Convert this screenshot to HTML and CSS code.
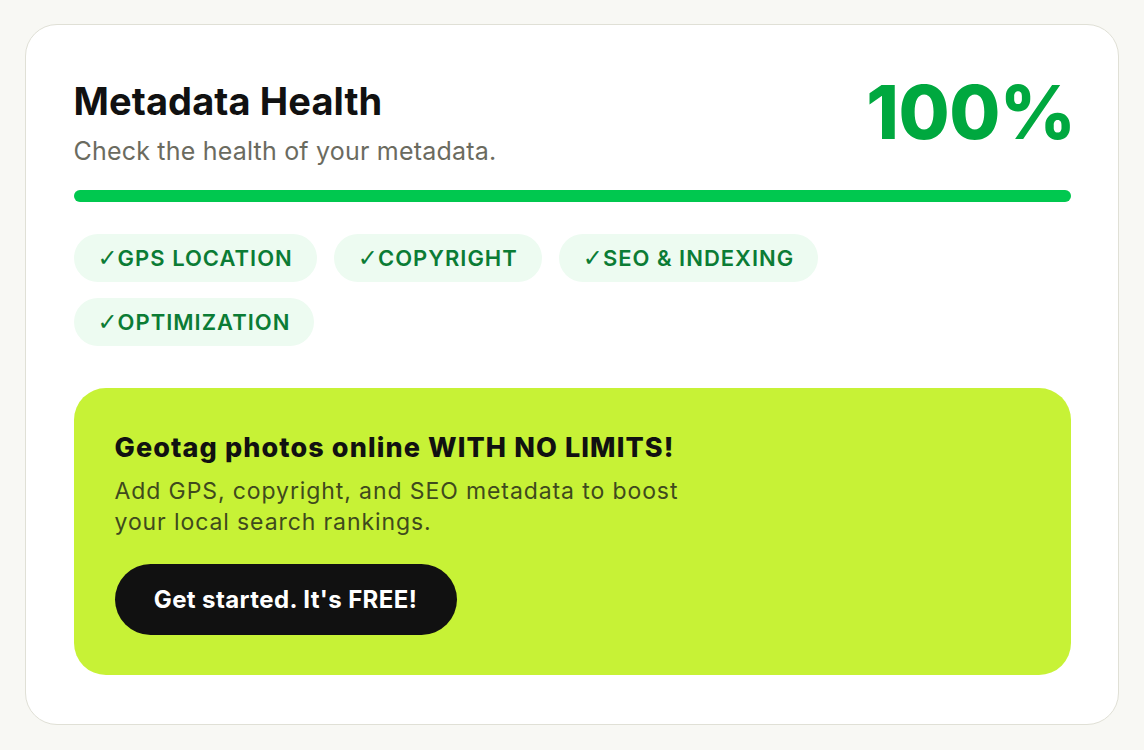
FILE: index.html
```html
<!DOCTYPE html>
<html lang="en">
<head>
<meta charset="utf-8">
<title>Metadata Health</title>
<link rel="stylesheet" href="styles.css">
</head>
<body>
<div class="card">
  <div class="head">
    <div class="head-text">
      <h1 class="title">Metadata Health</h1>
      <p class="subtitle">Check the health of your metadata.</p>
    </div>
    <div class="score">100%</div>
  </div>
  <div class="bar"><div class="bar-fill" style="width:100%"></div></div>
  <div class="chips">
    <span class="chip"><span class="tick">✓</span>GPS LOCATION</span>
    <span class="chip"><span class="tick">✓</span>COPYRIGHT</span>
    <span class="chip"><span class="tick">✓</span>SEO &amp; INDEXING</span>
    <span class="chip"><span class="tick">✓</span>OPTIMIZATION</span>
  </div>
  <div class="promo">
    <h2 class="promo-title">Geotag photos online WITH NO LIMITS!</h2>
    <p class="promo-text">Add GPS, copyright, and SEO metadata to boost your local search rankings.</p>
    <a class="cta" href="#">Get started. It's FREE!</a>
  </div>
</div>
</body>
</html>
```
FILE: styles.css
```css
* { box-sizing: border-box; }
html, body { margin: 0; padding: 0; }
body {
  background: #f8f8f4;
  font-family: Inter, "Open Sans", "Liberation Sans", sans-serif;
  padding: 24px 25px;
  height: 750px;
}
.card {
  background: #ffffff;
  border: 1.5px solid #e0e0d6;
  border-radius: 32px;
  padding: 54px 47.5px 0 47.5px;
  width: 1094px;
  height: 701px;
}
.head {
  display: flex;
  justify-content: space-between;
  align-items: flex-start;
  height: 87px;
}
.title {
  margin: 0;
  font-size: 38px;
  font-weight: 700;
  color: #111111;
  line-height: 44px;
  letter-spacing: 0.1px;
}
.subtitle {
  margin: 13px 0 0 0;
  font-size: 25px;
  color: #6b6b5f;
  line-height: 30px;
  letter-spacing: 0.2px;
}
.score {
  font-size: 74px;
  font-weight: 800;
  color: #00a83f;
  line-height: 80px;
  margin-top: -7px;
  margin-right: -5px;
  letter-spacing: -0.5px;
}
.bar {
  margin-top: 24px;
  height: 12px;
  border-radius: 6px;
  background: #e6f5ea;
}
.bar-fill {
  height: 100%;
  border-radius: 6px;
  background: #00c84f;
}
.chips {
  margin-top: 32px;
  display: flex;
  flex-wrap: wrap;
  gap: 16px 17px;
  width: 800px;
}
.chip {
  display: inline-flex;
  align-items: center;
  height: 48px;
  padding: 0 24px;
  border-radius: 24px;
  background: #edfbf1;
  color: #0b7c35;
  font-size: 22px;
  font-weight: 600;
  letter-spacing: 1px;
}
.tick {
  font-family: "DejaVu Sans", sans-serif;
  font-size: 24px;
  font-weight: 700;
  letter-spacing: 0;
  margin-right: 0;
}
.promo {
  margin-top: 42px;
  background: #c7f236;
  border-radius: 32px;
  padding: 44px 40px 40px 41px;
  height: 287px;
}
.promo-title {
  margin: 0;
  font-size: 27px;
  font-weight: 800;
  color: #111111;
  line-height: 32px;
  letter-spacing: 1.1px;
}
.promo-text {
  margin: 12px 0 0 0;
  font-size: 23px;
  line-height: 31px;
  color: #3f4a1d;
  letter-spacing: 0.9px;
  max-width: 620px;
}
.cta {
  display: inline-flex;
  align-items: center;
  justify-content: center;
  margin-top: 26px;
  height: 71px;
  width: 342px;
  border-radius: 36px;
  background: #111111;
  color: #ffffff;
  font-size: 24px;
  font-weight: 700;
  letter-spacing: 0.4px;
  text-decoration: none;
}
```
